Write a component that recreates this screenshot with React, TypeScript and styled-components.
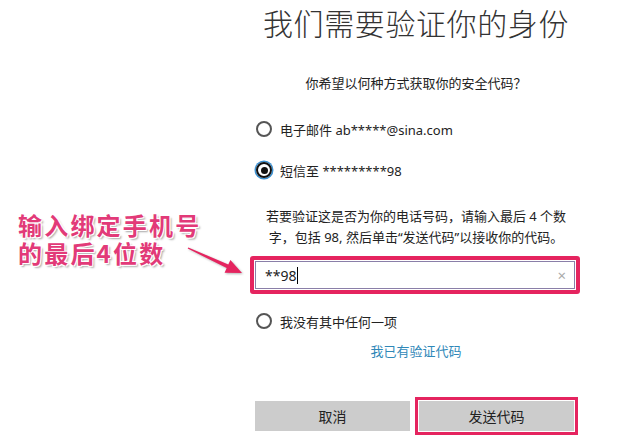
import styled, { createGlobalStyle } from 'styled-components'

const GlobalStyle = createGlobalStyle`
  html, body {
    margin: 0;
    padding: 0;
    background: #fff;
  }
  body {
    font-family: "Noto Sans", "Noto Sans CJK SC", sans-serif;
    color: #222;
  }
`

const Page = styled.div`
  position: relative;
  width: 642px;
  height: 446px;
  overflow: hidden;
  background: #fff;
`

const Column = styled.div`
  margin-left: 255px;
  width: 322px;
  display: flex;
  flex-direction: column;
`

const Title = styled.h1`
  margin: 0;
  padding-top: 1px;
  font-family: "Noto Sans CJK SC", sans-serif;
  font-weight: 300;
  font-size: 30px;
  line-height: 42px;
  letter-spacing: 0.6px;
  color: #333;
  text-align: center;
  white-space: nowrap;
`

const Question = styled.p`
  margin: 30px 0 0;
  font-size: 13px;
  line-height: 20px;
  text-align: center;
  color: #222;
`

const OptionRow = styled.label<{ $gap: number }>`
  display: flex;
  align-items: center;
  gap: 8px;
  height: 24px;
  margin-top: ${p => p.$gap}px;
  font-size: 13px;
  color: #222;
`

const Radio = styled.span<{ $on?: boolean }>`
  box-sizing: border-box;
  width: 16px;
  height: 16px;
  margin-left: 1px;
  border-radius: 50%;
  border: 2px solid ${p => (p.$on ? '#111' : '#555')};
  box-shadow: ${p => (p.$on ? '0 0 0 1.5px #3a8fd0' : 'none')};
  display: flex;
  align-items: center;
  justify-content: center;
  &::after {
    content: '';
    display: ${p => (p.$on ? 'block' : 'none')};
    width: 7px;
    height: 7px;
    border-radius: 50%;
    background: #111;
  }
`

const Hint = styled.p`
  margin: 24px 0 0;
  font-size: 13px;
  line-height: 21px;
  text-align: center;
  color: #222;
`

const Highlight = styled.div`
  margin: 8px 0 0 -5px;
  width: 330px;
  box-sizing: border-box;
  border: 4px solid #e5245f;
  border-radius: 3px;
  padding: 1px;
`

const Field = styled.div`
  box-sizing: border-box;
  height: 28px;
  border: 1px solid #8a7fa8;
  background: #fff;
  display: flex;
  align-items: center;
  padding: 0 8px 0 9px;
  font-size: 14px;
  color: #222;
`

const Caret = styled.span`
  display: inline-block;
  width: 1px;
  height: 17px;
  background: #000;
  margin-left: 1px;
`

const Clear = styled.span`
  margin-left: auto;
  font-size: 15px;
  color: #aaa;
  line-height: 1;
`

const Link = styled.a`
  margin-top: 8px;
  font-size: 13px;
  line-height: 20px;
  text-align: center;
  color: #2f88b8;
  text-decoration: none;
`

const Buttons = styled.div`
  margin-top: 40px;
  display: grid;
  grid-template-columns: 155px 155px;
  gap: 9px;
`

const Button = styled.button<{ $marked?: boolean }>`
  height: 30px;
  border: none;
  background: #cccccc;
  font-family: "Noto Sans CJK SC", sans-serif;
  font-size: 14px;
  color: #222;
  outline: ${p => (p.$marked ? '3px solid #e5245f' : 'none')};
  outline-offset: 1px;
  border-radius: 0;
`

const Note = styled.div`
  position: absolute;
  left: 18px;
  top: 211px;
  display: flex;
  flex-direction: column;
  gap: 1px;
`

const NoteLine = styled.div`
  font-family: "Noto Sans CJK SC", sans-serif;
  font-weight: 700;
  font-size: 24px;
  line-height: 27px;
  height: 27px;
  letter-spacing: 2.2px;
  white-space: nowrap;
  color: #e23a78;
  text-shadow:
    -1px -1px 0 #fff, 1px -1px 0 #fff, -1px 1px 0 #fff, 1px 1px 0 #fff,
    2px 2px 2px rgba(0, 0, 0, 0.35);
`

const Arrow = styled.svg`
  position: absolute;
  left: 180px;
  top: 240px;
  width: 70px;
  height: 40px;
  overflow: visible;
`

export default function App() {
  return (
    <Page>
      <GlobalStyle />
      <Column>
        <Title>我们需要验证你的身份</Title>
        <Question>你希望以何种方式获取你的安全代码？</Question>
        <OptionRow $gap={24}>
          <Radio />
          <span>电子邮件 ab*****@sina.com</span>
        </OptionRow>
        <OptionRow $gap={17}>
          <Radio $on />
          <span>短信至 *********98</span>
        </OptionRow>
        <Hint>
          若要验证这是否为你的电话号码，请输入最后 4 个数
          <br />
          字，包括 98, 然后单击“发送代码”以接收你的代码。
        </Hint>
        <Highlight>
          <Field>
            <span>**98</span>
            <Caret />
            <Clear>×</Clear>
          </Field>
        </Highlight>
        <OptionRow $gap={15}>
          <Radio />
          <span>我没有其中任何一项</span>
        </OptionRow>
        <Link href="#">我已有验证代码</Link>
        <Buttons>
          <Button>取消</Button>
          <Button $marked>发送代码</Button>
        </Buttons>
      </Column>
      <Note>
        <NoteLine>输入绑定手机号</NoteLine>
        <NoteLine>的最后4位数</NoteLine>
      </Note>
      <Arrow viewBox="0 0 70 40">
        <polygon
          points="8.3,7.4 48.3,24.5 50.4,19.95 62,33 44.6,32.65 46.7,28.1 7.7,8.6"
          fill="#e5245f"
          style={{ filter: 'drop-shadow(1px 1px 1px rgba(0,0,0,0.3))' }}
        />
      </Arrow>
    </Page>
  )
}
